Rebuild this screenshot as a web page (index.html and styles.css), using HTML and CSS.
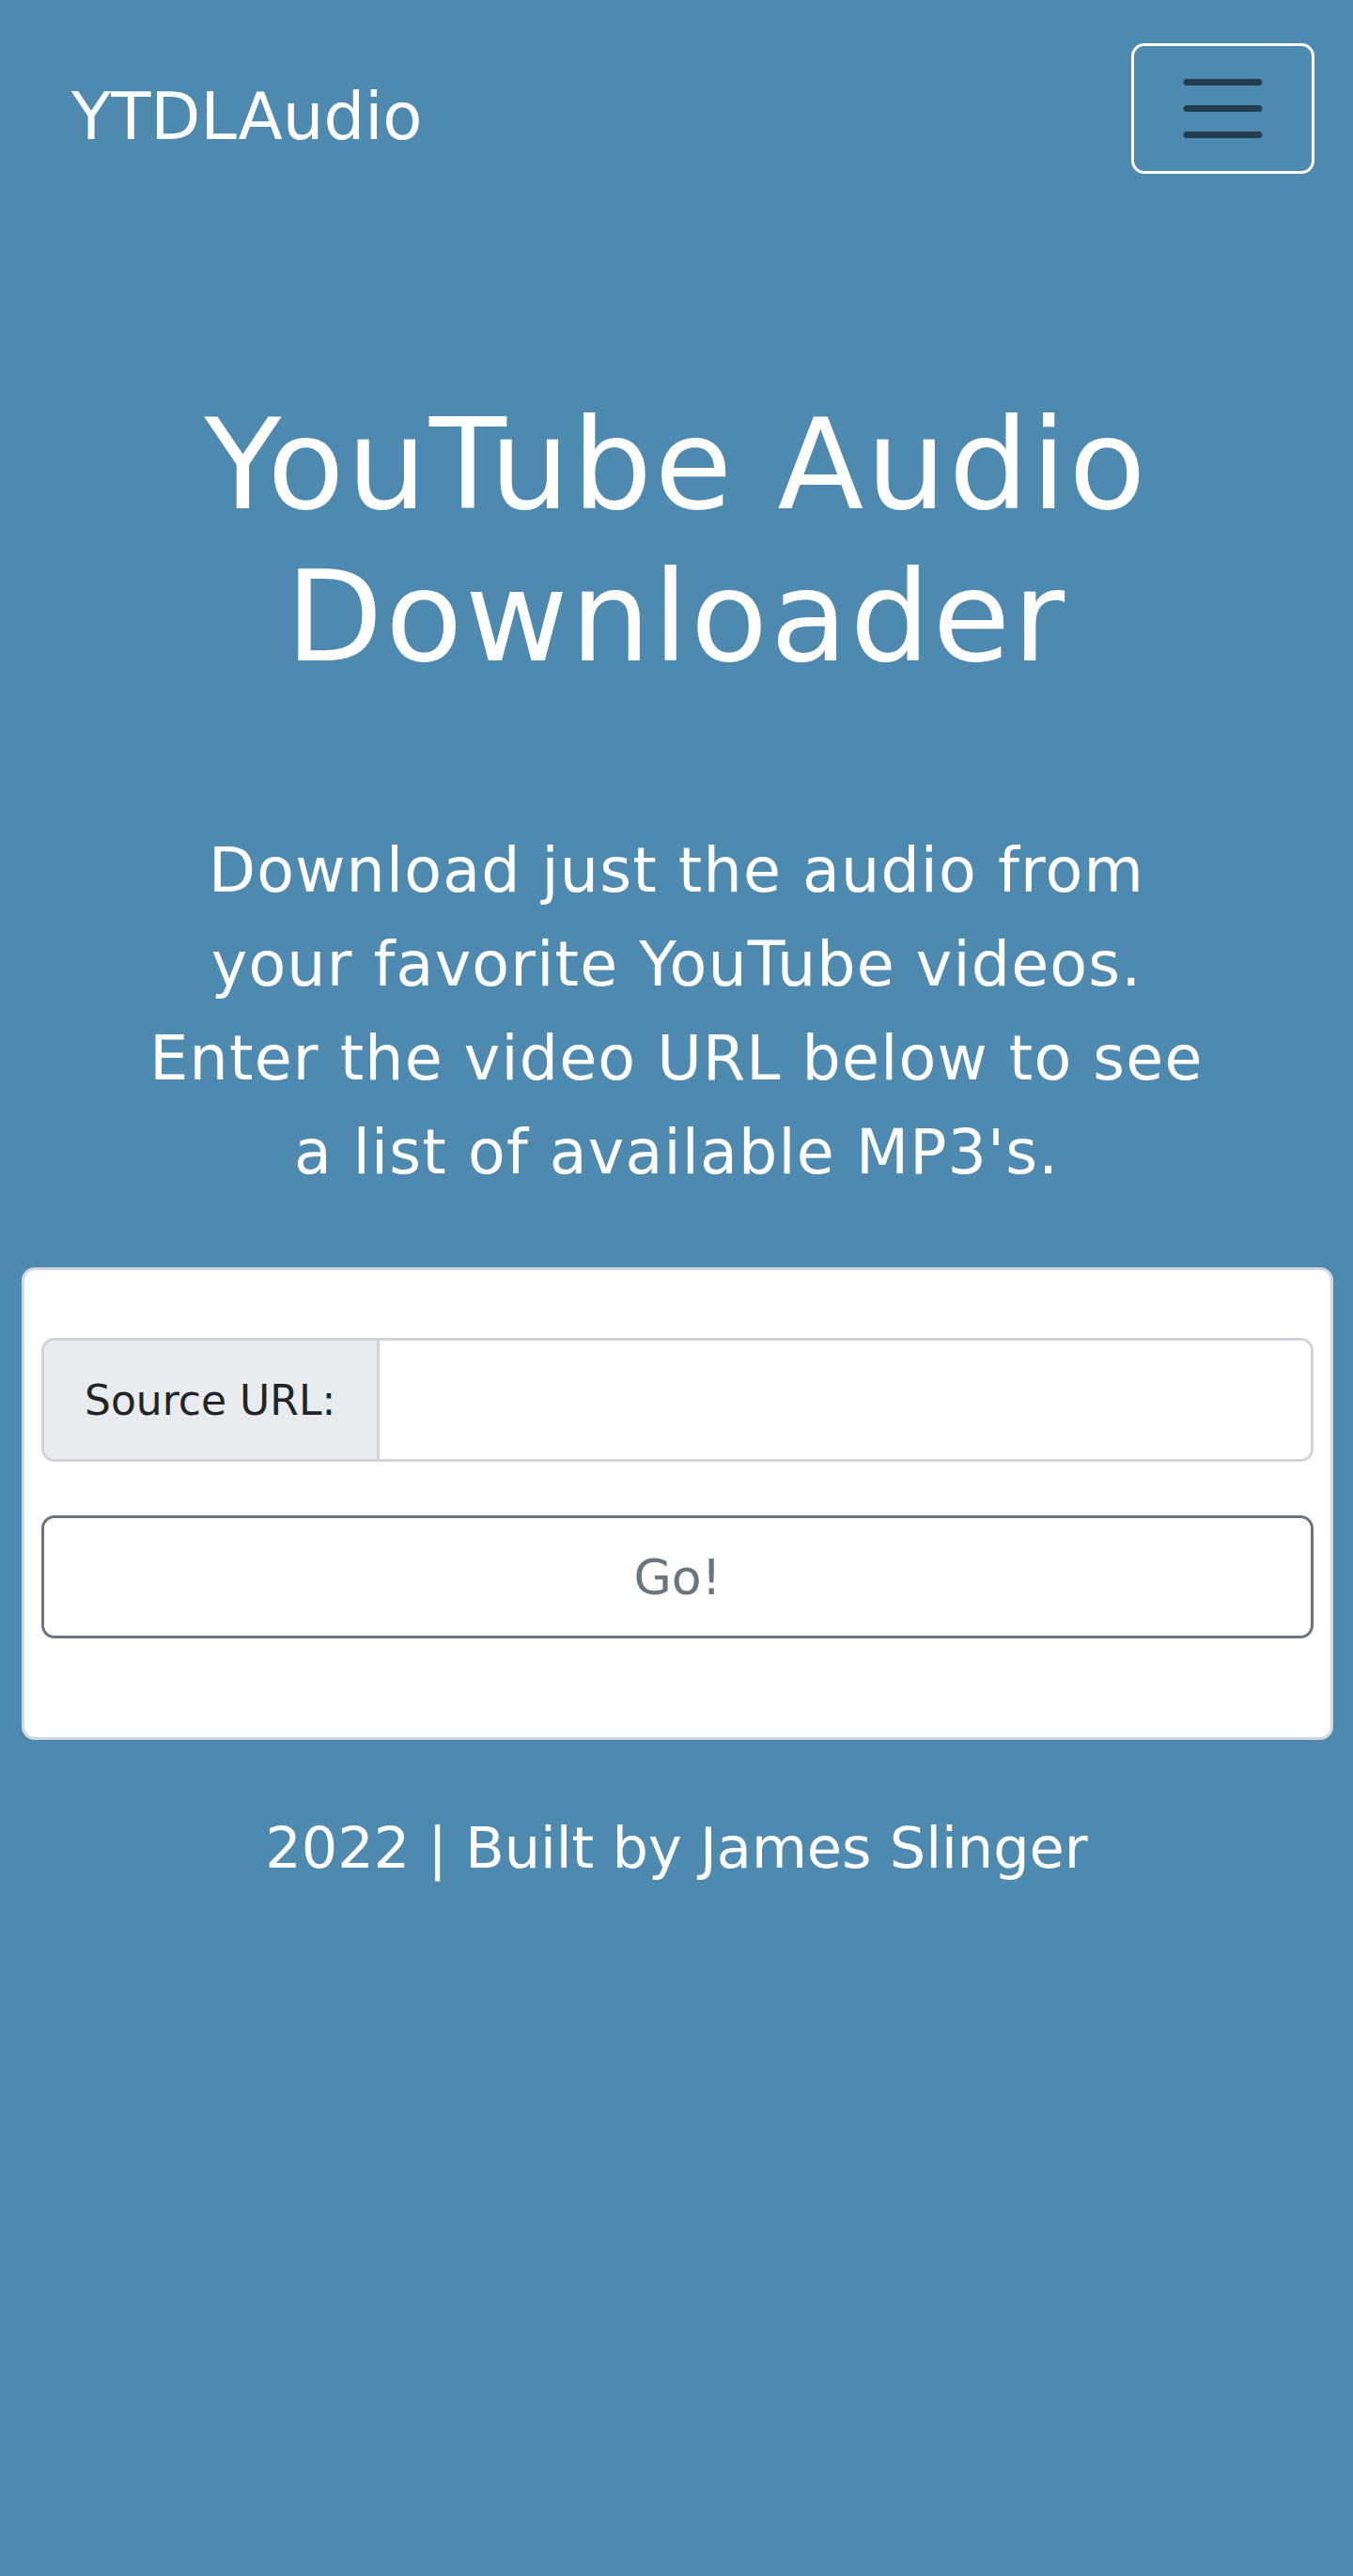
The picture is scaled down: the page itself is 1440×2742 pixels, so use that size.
FILE: index.html
```html
<!DOCTYPE html>
<html lang="en">
<head>
<meta charset="utf-8">
<title>YTDLAudio</title>
<link rel="stylesheet" href="styles.css">
</head>
<body>
<nav class="navbar">
  <a class="brand" href="#">YTDLAudio</a>
  <button class="toggler" type="button" aria-label="Toggle navigation">
    <svg class="toggler-icon" viewBox="0 0 30 30" width="105" height="105" aria-hidden="true">
      <path d="M4 7h22M4 15h22M4 23h22" fill="none" stroke="rgba(0,0,0,0.55)" stroke-width="2" stroke-linecap="round"/>
    </svg>
  </button>
</nav>
<main class="main">
  <h1 class="title">YouTube Audio Downloader</h1>
  <p class="lead">Download just the audio from your favorite YouTube videos. Enter the video URL below to see a list of available MP3's.</p>
  <section class="card">
    <form class="form">
      <div class="input-group">
        <span class="input-label">Source URL:</span>
        <input class="input" type="text" aria-label="Source URL">
      </div>
      <button class="go" type="button">Go!</button>
    </form>
  </section>
  <footer class="footer">2022 | Built by James Slinger</footer>
</main>
</body>
</html>
```

FILE: styles.css
```css
html, body {
  margin: 0;
  padding: 0;
}
body {
  background: #4e8aaf;
  color: #ffffff;
  font-family: "DejaVu Sans", "Liberation Sans", sans-serif;
  min-height: 2742px;
}
.navbar {
  display: flex;
  justify-content: space-between;
  align-items: flex-start;
  padding: 46px 41px 0 76px;
}
.brand {
  color: #ffffff;
  text-decoration: none;
  font-size: 69px;
  line-height: 105px;
  margin-top: 26px;
}
.toggler {
  width: 195px;
  height: 139px;
  border: 3px solid #ffffff;
  border-radius: 14px;
  background: transparent;
  padding: 0;
  display: flex;
  align-items: center;
  justify-content: center;
}
.toggler-icon {
  display: block;
}
.main {
  display: flex;
  flex-direction: column;
  align-items: center;
}
.title {
  margin: 229px 0 0;
  font-size: 134px;
  font-weight: normal;
  line-height: 162px;
  letter-spacing: 2.8px;
  text-align: center;
}
.lead {
  margin: 139px 0 0;
  width: 1140px;
  font-size: 65px;
  line-height: 100px;
  letter-spacing: 1.2px;
  text-align: center;
}
.card {
  align-self: stretch;
  margin: 72px 21px 0 23px;
  background: #ffffff;
  border: 3px solid #d3d8dd;
  border-radius: 14px;
  padding: 72px 18px 105px;
}
.form {
  display: flex;
  flex-direction: column;
  gap: 57px;
}
.input-group {
  display: flex;
  height: 132px;
  box-sizing: border-box;
  border: 3px solid #ced4da;
  border-radius: 14px;
  overflow: hidden;
}
.input-label {
  display: flex;
  align-items: center;
  background: #e9ecef;
  color: #212529;
  font-size: 44px;
  padding: 0 44px 0 43px;
  border-right: 3px solid #ced4da;
  white-space: nowrap;
}
.input {
  flex: 1;
  border: 0;
  outline: none;
  background: #ffffff;
  font-family: inherit;
  font-size: 50px;
  padding: 0 40px;
  min-width: 0;
}
.go {
  height: 131px;
  box-sizing: border-box;
  width: 100%;
  background: #ffffff;
  border: 3px solid #6c757d;
  border-radius: 14px;
  color: #6c757d;
  font-family: inherit;
  font-size: 52px;
  padding: 0;
}
.footer {
  margin-top: 70px;
  font-size: 60.5px;
  line-height: 91px;
  text-align: center;
}
```
